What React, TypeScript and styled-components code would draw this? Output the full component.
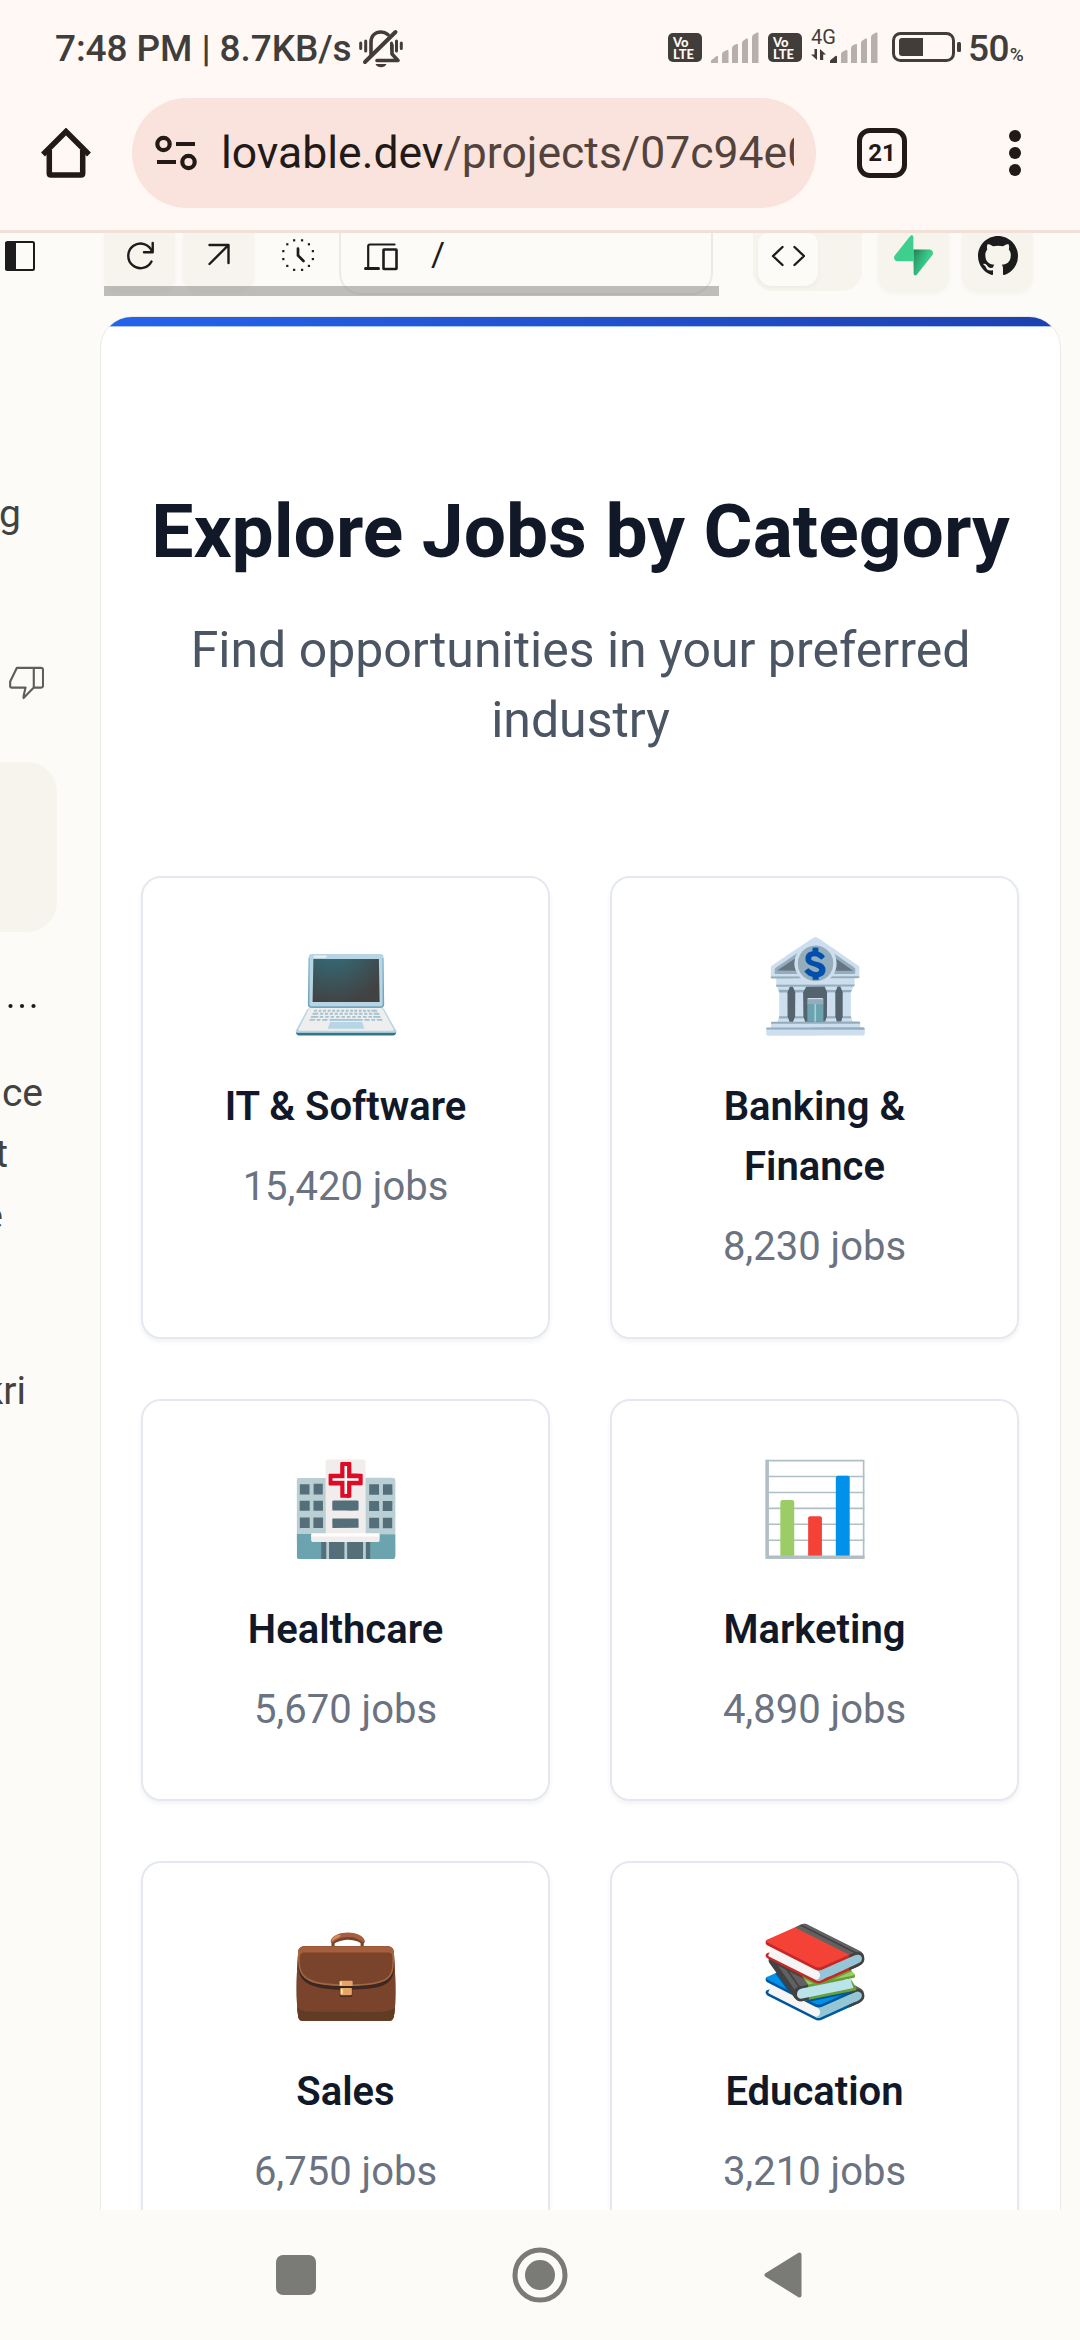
import React from "react";
import styled, { createGlobalStyle } from "styled-components";

const GlobalStyle = createGlobalStyle`
  *, *::before, *::after { box-sizing: border-box; }
  html, body { margin: 0; padding: 0; background: #fcfbf8; }
  body { font-family: Roboto, "Noto Sans", sans-serif; }
  svg { display: block; flex: none; }
`;

const Screen = styled.div`
  width: 1080px;
  height: 2340px;
  display: flex;
  flex-direction: column;
  overflow: hidden;
  background: #fcfbf8;
`;

/* ---------- status bar ---------- */
const StatusBar = styled.header`
  height: 98px;
  flex: none;
  display: flex;
  align-items: flex-start;
  padding: 0 55px 0 55px;
  background: #fff8f5;
  color: #403d3a;
`;
const Clock = styled.span`
  font-size: 37px;
  line-height: 44px;
  margin-top: 27px;
  font-weight: 500;
  letter-spacing: -0.1px;
  white-space: pre;
`;
const StatusGlyph = styled.div<{ $top: number; $left: number }>`
  margin-top: ${(p) => p.$top}px;
  margin-left: ${(p) => p.$left}px;
`;
const StatusRight = styled.div`
  margin-left: auto;
  display: flex;
  align-items: flex-start;
`;
const VolteBadge = styled.div<{ $left?: number }>`
  width: 34px;
  height: 29px;
  margin-top: 33px;
  margin-left: ${(p) => p.$left ?? 0}px;
  border-radius: 5px;
  background: #403d3a;
  color: #fff8f5;
  font: 900 13px/12px Lato, sans-serif;
  padding: 3px 0 0 5px;
`;
const NetworkType = styled.div`
  width: 28px;
  margin-left: 9px;
  margin-top: 26px;
  font-size: 20px;
  line-height: 23px;
`;
const Percent = styled.div`
  margin: 27px 0 0 6px;
  font-size: 37px;
  line-height: 44px;
  font-weight: 500;
  width: 57px;
  white-space: nowrap;
  letter-spacing: -0.6px;
  small { font-size: 19px; margin-left: 1px; }
`;

/* ---------- browser bar ---------- */
const BrowserBar = styled.div`
  height: 135px;
  flex: none;
  display: flex;
  align-items: flex-start;
  background: #fff8f5;
  border-bottom: 3px solid #f3dfd9;
`;
const HomeSlot = styled.div`
  width: 132px;
  padding: 30px 0 0 41px;
`;
const AddressPill = styled.div`
  width: 684px;
  height: 110px;
  border-radius: 55px;
  background: #f9e3dc;
  display: flex;
  align-items: center;
  padding: 0 22px 0 23px;
`;
const Url = styled.div`
  width: 573px;
  margin-left: 23px;
  overflow: hidden;
  white-space: nowrap;
  font-size: 44.5px;
  line-height: 60px;
  color: #54433d;
  b { font-weight: 400; color: #231917; }
`;
const TabCount = styled.div`
  width: 50px;
  height: 50px;
  margin: 30px 0 0 41px;
  border: 5.5px solid #231917;
  border-radius: 13px;
  display: flex;
  align-items: center;
  justify-content: center;
  font-size: 24px;
  font-weight: 700;
  color: #231917;
`;
const MenuSlot = styled.div`
  padding: 31px 0 0 101px;
`;

/* ---------- page ---------- */
const Page = styled.main`
  height: 1977px;
  flex: none;
  display: grid;
  grid-template-columns: 100px 980px;
  overflow: hidden;
  background: #fcfbf8;
`;
const Chat = styled.aside`
  display: flex;
  flex-direction: column;
  align-items: flex-start;
  overflow: hidden;
`;
const ChatIcon = styled.div<{ $top: number; $left: number }>`
  margin: ${(p) => p.$top}px 0 0 ${(p) => p.$left}px;
`;
const ChatLine = styled.div<{ $top?: number; $width: number }>`
  width: ${(p) => p.$width}px;
  margin-top: ${(p) => p.$top ?? 0}px;
  display: flex;
  justify-content: flex-end;
  overflow: hidden;
  white-space: nowrap;
  font-size: 39px;
  line-height: 61px;
  color: #44423f;
`;
const Bubble = styled.div`
  width: 57px;
  height: 170px;
  margin-top: 62px;
  border-radius: 0 30px 30px 0;
  background: #f7f4ed;
`;

const Main = styled.div`
  display: flex;
  flex-direction: column;
`;
const Toolbar = styled.div`
  height: 83px;
  flex: none;
  display: flex;
  align-items: flex-start;
  padding-left: 4px;
  color: #1c1c1c;
`;
const ScrollStrip = styled.div`
  position: relative;
  width: 615px;
  height: 63px;
  display: flex;
  align-items: flex-start;
`;
const ScrollThumb = styled.div`
  position: absolute;
  left: 0;
  right: 0;
  bottom: 0;
  height: 10px;
  background: rgba(128, 128, 128, 0.5);
`;
const ToolButton = styled.div<{ $plain?: boolean; $left?: number; $top?: number }>`
  width: 71px;
  height: 59px;
  margin-left: ${(p) => p.$left ?? 0}px;
  padding-top: ${(p) => p.$top ?? 5}px;
  display: flex;
  justify-content: center;
  border-radius: 0 0 16px 16px;
  background: ${(p) => (p.$plain ? "transparent" : "#f7f4ed")};
  box-shadow: ${(p) => (p.$plain ? "none" : "0 2px 5px rgba(0, 0, 0, 0.035)")};
`;
const RouteBox = styled.div`
  width: 374px;
  height: 62px;
  margin-left: 6px;
  border: 2px solid #eceae4;
  border-top: 0;
  border-radius: 0 0 22px 22px;
  display: flex;
  padding: 9px 0 0 23px;
`;
const Slash = styled.span`
  font-size: 34px;
  line-height: 30px;
  margin: -3px 0 0 33px;
`;
const ViewSwitch = styled.div`
  width: 109px;
  height: 58px;
  margin-left: 34px;
  padding-left: 5px;
  border-radius: 0 0 20px 20px;
  background: #f7f4ed;
`;
const ViewOption = styled.div`
  width: 60px;
  height: 53px;
  display: flex;
  justify-content: center;
  padding-top: 12px;
  border-radius: 10px 10px 14px 14px;
  background: #fcfbf8;
  box-shadow: 0 2px 4px rgba(0, 0, 0, 0.04);
`;

const Preview = styled.section`
  width: 961px;
  height: 1920px;
  flex: none;
  border: 1.5px solid #eceae4;
  border-radius: 32px 32px 0 0;
  background: #fff;
  overflow: hidden;
  display: flex;
  flex-direction: column;
`;
const Hero = styled.div`
  height: 10px;
  flex: none;
  background: linear-gradient(90deg, #2563eb, #1e40af);
  border-bottom: 1px solid #a9c4fa;
`;
const Categories = styled.div`
  padding: 159px 40px 0;
  text-align: center;
`;
const Title = styled.h2`
  margin: 0 -20px;
  font-size: 75px;
  line-height: 90px;
  font-weight: 700;
  white-space: nowrap;
  color: #111827;
`;
const Subtitle = styled.p`
  margin: 39px 0 0;
  font-size: 50px;
  line-height: 70px;
  color: #4b5563;
`;
const CardGrid = styled.div`
  margin-top: 121px;
  display: grid;
  grid-template-columns: 409px 409px;
  grid-template-rows: 463px 402px 402px;
  gap: 60px;
  justify-content: start;
`;
const Card = styled.article`
  border: 2px solid #e4e9f0;
  border-radius: 20px;
  background: #fff;
  box-shadow: 0 3px 5px rgba(0, 0, 0, 0.05);
  padding: 59px 58px 0;
`;
const Emoji = styled.div`
  height: 100px;
  font-size: 90px;
  line-height: 100px;
  display: flex;
  justify-content: center;
`;
const CardName = styled.h3`
  margin: 40px 0 20px;
  font-size: 40px;
  line-height: 60px;
  font-weight: 600;
  color: #111827;
`;
const JobCount = styled.p`
  margin: 0;
  font-size: 40px;
  line-height: 60px;
  color: #6b7280;
`;

const NavBar = styled.nav`
  height: 130px;
  flex: none;
  background: #fcfbf8;
  display: flex;
  align-items: center;
  padding-left: 276px;
`;
const NavGlyph = styled.div<{ $left: number }>`
  margin-left: ${(p) => p.$left}px;
`;

/* ---------- icons ---------- */
const SilentBell = () => (
  <svg width="44" height="39" viewBox="0 0 44 39" fill="none" stroke="#403d3a" strokeLinecap="round">
    <path d="M12 26V13.5C12 7 16 3 22 3c3 0 5 1 7 2.6M33 16v9l6 6.5H18" strokeWidth="3.6" strokeLinejoin="round" />
    <path d="M36.500 3 6 33" strokeWidth="4" />
    <path d="M16.500 35h11c-1 2.300-3 3.300-5.500 3.300s-4.500-1-5.500-3.300z" fill="#403d3a" stroke="none" />
    <path d="M1.700 14v5.500M6.700 12v10M32.500 14v6M37.500 12v10M42.300 14v5.500" strokeWidth="3" />
  </svg>
);

const Signal = ({ lit }: { lit?: boolean }) => (
  <svg width="48" height="31" viewBox="0 0 48 31" fill="#b5b0ad">
    <path d="M0 31v-2.500L5.500 24q1.500-.8 1.500.8V31z" fill={lit ? "#403d3a" : "#b5b0ad"} />
    <path d="M11 31V22.500q0-2 1.500-2.800l3.500-1.600q1.500-.4 1.500 1V31z" />
    <path d="M21 31V16q0-1.500 1.500-2.500l3-1.500q1.500-.5 1.500 1V31z" />
    <path d="M31 31V11q0-1.500 1.500-2.500l3-2q1.500-.5 1.500 1V31z" />
    <path d="M41 31V5q0-1.500 1.500-2.500l3.500-2q1.500-.5 1.500 1V31z" />
  </svg>
);

const DataArrows = () => (
  <svg width="16" height="11" viewBox="0 0 16 11" fill="#403d3a">
    <path d="M3.500 0H6v11L0 5.500h3.500zM9 0l6 5.500h-2.800V11H9z" />
  </svg>
);

const Battery = () => (
  <svg width="70" height="30" viewBox="0 0 70 30">
    <rect x="1.500" y="1.500" width="60" height="27" rx="7" fill="none" stroke="#403d3a" strokeWidth="3" />
    <rect x="7" y="6" width="24" height="18" rx="3" fill="#403d3a" />
    <rect x="27" y="6" width="4" height="18" fill="#403d3a" />
    <rect x="65" y="10" width="4" height="10" rx="1.500" fill="#403d3a" />
  </svg>
);

const Home = () => (
  <svg width="50" height="50" viewBox="0 0 50 50" fill="none" stroke="#231917" strokeWidth="5.500" strokeLinejoin="round">
    <path d="M8.300 22V45.500Q8.300 47 10 47H40Q41.700 47 41.700 45.500V22" />
    <path d="M2 26.500 25 3.500 48 26.500" strokeLinejoin="miter" />
  </svg>
);

const SiteSettings = () => (
  <svg width="43" height="36" viewBox="0 0 43 36" fill="none" stroke="#231917" strokeWidth="4.200">
    <circle cx="8.500" cy="9" r="6.200" />
    <path d="M21 9H40M2 27H21" />
    <circle cx="33.500" cy="27" r="6.200" />
  </svg>
);

const Dots = () => (
  <svg width="14" height="48" viewBox="0 0 14 48" fill="#231917">
    <circle cx="7" cy="7" r="6" />
    <circle cx="7" cy="24" r="6" />
    <circle cx="7" cy="41" r="6" />
  </svg>
);

const PanelIcon = () => (
  <svg width="30" height="30" viewBox="0 0 30 30">
    <rect x="1" y="1" width="28" height="28" rx="1.500" fill="none" stroke="#1c1c1c" strokeWidth="2" />
    <rect x="0" y="1" width="11" height="28" rx="1" fill="#1c1c1c" />
  </svg>
);

const ThumbDown = () => (
  <svg width="35" height="34" viewBox="0 0 36 34" fill="none" stroke="#5f5e5b" strokeWidth="2.200" strokeLinejoin="round">
    <path d="M25.500 1.500H8L1.200 15.500V20q0 1.700 1.700 1.700H17L15 30.500V32.500L25.500 21.700zM25.500 1.500H33q2 0 2 2V19.700q0 2-2 2H25.500" />
  </svg>
);

const Ellipsis = () => (
  <svg width="30" height="6" viewBox="0 0 30 6" fill="#1c1c1c">
    <circle cx="2.500" cy="3" r="2.100" />
    <circle cx="14" cy="3" r="2.100" />
    <circle cx="25.500" cy="3" r="2.100" />
  </svg>
);

const Reload = () => (
  <svg width="34" height="34" viewBox="0 0 34 34" fill="none" stroke="#1c1c1c" strokeWidth="2.400" strokeLinecap="round" strokeLinejoin="round">
    <path d="M28.500 23.500A12.300 12.300 0 1 1 29 13.300" />
    <path d="M29.700 5V14.300H21" />
  </svg>
);

const ArrowUpRight = () => (
  <svg width="34" height="34" viewBox="0 0 34 34" fill="none" stroke="#1c1c1c" strokeWidth="2.400" strokeLinecap="round" strokeLinejoin="round">
    <path d="M7.500 7H26.500V25M7.500 26 26.500 7" />
  </svg>
);

const History = () => (
  <svg width="34" height="34" viewBox="0 0 34 34" fill="none" stroke="#1c1c1c">
    <path d="M17 10.500V17.500L22.500 23" strokeWidth="2.700" strokeLinecap="round" />
    {Array.from({ length: 12 }, (_, i) => {
      const a = ((i * 30 + 15) * Math.PI) / 180;
      return <rect key={i} x={16 + 15.3 * Math.cos(a)} y={16 + 15.3 * Math.sin(a)} width="2.2" height="2.2" fill="#1c1c1c" stroke="none" />;
    })}
  </svg>
);

const Devices = () => (
  <svg width="34" height="30" viewBox="0 0 34 30" fill="none" stroke="#1c1c1c" strokeWidth="2.200" strokeLinecap="round">
    <path d="M30.500 2.500H6Q4.200 2.500 4.200 4.200V25" />
    <path d="M1.500 26.500H14.500" strokeWidth="3" />
    <rect x="19.500" y="7.500" width="13" height="19.500" rx=".5" strokeWidth="2.600" />
  </svg>
);

const Code = () => (
  <svg width="34" height="22" viewBox="0 0 34 22" fill="none" stroke="#1c1c1c" strokeWidth="2.400" strokeLinecap="round" strokeLinejoin="round">
    <path d="M11.500 2 2 11 11.500 20M23.500 2 33 11 23.500 20" />
  </svg>
);

const Supabase = () => (
  <svg width="39" height="41" viewBox="0 0 109 113">
    <defs>
      <linearGradient id="bolt" x1="53.9" y1="54.9" x2="94.1" y2="71.8" gradientUnits="userSpaceOnUse">
        <stop stopColor="#249361" />
        <stop offset="1" stopColor="#3ECF8E" />
      </linearGradient>
      <linearGradient id="shade" x1="36.1" y1="30.5" x2="54.4" y2="65" gradientUnits="userSpaceOnUse">
        <stop />
        <stop offset="1" stopOpacity="0" />
      </linearGradient>
    </defs>
    <path d="M63.700 110.300C60.800 113.900 55 111.900 55 107.300L54 40.060H99.200C107.400 40.060 112 49.500 106.900 55.900Z" fill="url(#bolt)" />
    <path d="M63.700 110.300C60.800 113.900 55 111.900 55 107.300L54 40.060H99.200C107.400 40.060 112 49.500 106.900 55.900Z" fill="url(#shade)" fillOpacity=".2" />
    <path d="M45.300 2.070C48.200-1.530 54 .44 54 5.040L54.500 72.300H9.800C1.600 72.300-2.900 62.800 2.200 56.400Z" fill="#3ECF8E" />
  </svg>
);

const GitHub = () => (
  <svg width="40" height="40" viewBox="0 0 16 16" fill="#1c1c1c">
    <path d="M8 0C3.58 0 0 3.58 0 8c0 3.54 2.29 6.53 5.47 7.59.4.07.55-.17.55-.38 0-.19-.01-.82-.01-1.49-2.01.37-2.53-.49-2.69-.94-.09-.23-.48-.94-.82-1.13-.28-.15-.68-.52-.01-.53.63-.01 1.08.58 1.23.82.72 1.21 1.87.87 2.33.66.07-.52.28-.87.51-1.07-1.78-.2-3.64-.89-3.64-3.95 0-.87.31-1.59.82-2.15-.08-.2-.36-1.02.08-2.12 0 0 .67-.21 2.2.82.64-.18 1.32-.27 2-.27s1.360.09 2 .27c1.53-1.04 2.2-.82 2.2-.82.44 1.1.16 1.92.08 2.12.51.56.82 1.27.82 2.15 0 3.07-1.87 3.75-3.65 3.95.29.25.54.73.54 1.48 0 1.07-.01 1.93-.01 2.2 0 .21.15.46.55.38A8.01 8.01 0 0 0 16 8c0-4.42-3.58-8-8-8" />
  </svg>
);

const categories = [
  { name: "IT & Software", jobs: "15,420", icon: "💻" },
  { name: "Banking & Finance", jobs: "8,230", icon: "🏦" },
  { name: "Healthcare", jobs: "5,670", icon: "🏥" },
  { name: "Marketing", jobs: "4,890", icon: "📊" },
  { name: "Sales", jobs: "6,750", icon: "💼" },
  { name: "Education", jobs: "3,210", icon: "📚" },
];

export default function App() {
  return (
    <>
      <GlobalStyle />
      <Screen>
        <StatusBar>
          <Clock>7:48 PM | 8.7KB/s</Clock>
          <StatusGlyph $top={29} $left={8}><SilentBell /></StatusGlyph>
          <StatusRight>
            <VolteBadge>Vo<br />LTE</VolteBadge>
            <StatusGlyph $top={32} $left={9}><Signal /></StatusGlyph>
            <VolteBadge $left={9}>Vo<br />LTE</VolteBadge>
            <NetworkType>4G<DataArrows /></NetworkType>
            <StatusGlyph $top={32} $left={-9}><Signal lit /></StatusGlyph>
            <StatusGlyph $top={32} $left={14}><Battery /></StatusGlyph>
            <Percent>50<small>%</small></Percent>
          </StatusRight>
        </StatusBar>
        <BrowserBar>
          <HomeSlot><Home /></HomeSlot>
          <AddressPill>
            <SiteSettings />
            <Url><b>lovable.dev</b>/projects/07c94e0</Url>
          </AddressPill>
          <TabCount>21</TabCount>
          <MenuSlot><Dots /></MenuSlot>
        </BrowserBar>
        <Page>
          <Chat>
            <ChatIcon $top={8} $left={5}><PanelIcon /></ChatIcon>
            <ChatLine $top={213} $width={21}>g</ChatLine>
            <ChatIcon $top={121} $left={9}><ThumbDown /></ChatIcon>
            <Bubble />
            <ChatIcon $top={71} $left={8}><Ellipsis /></ChatIcon>
            <ChatLine $top={54} $width={43}>ce</ChatLine>
            <ChatLine $width={8}>t</ChatLine>
            <ChatLine $top={1} $width={3}>e</ChatLine>
            <ChatLine $top={114} $width={26}>kri</ChatLine>
          </Chat>
          <Main>
            <Toolbar>
              <ScrollStrip>
                <ToolButton><Reload /></ToolButton>
                <ToolButton $left={8}><ArrowUpRight /></ToolButton>
                <ToolButton $plain $left={8}><History /></ToolButton>
                <RouteBox><Devices /><Slash>/</Slash></RouteBox>
                <ScrollThumb />
              </ScrollStrip>
              <ViewSwitch><ViewOption><Code /></ViewOption></ViewSwitch>
              <ToolButton $left={16} $top={2}><Supabase /></ToolButton>
              <ToolButton $left={13} $top={3}><GitHub /></ToolButton>
            </Toolbar>
            <Preview>
              <Hero />
              <Categories>
                <Title>Explore Jobs by Category</Title>
                <Subtitle>Find opportunities in your preferred<br />industry</Subtitle>
                <CardGrid>
                  {categories.map((c) => (
                    <Card key={c.name}>
                      <Emoji>{c.icon}</Emoji>
                      <CardName>{c.name}</CardName>
                      <JobCount>{c.jobs} jobs</JobCount>
                    </Card>
                  ))}
                </CardGrid>
              </Categories>
            </Preview>
          </Main>
        </Page>
        <NavBar>
          <svg width="40" height="40" fill="#7a7a77"><rect width="40" height="40" rx="7" /></svg>
          <NavGlyph $left={196}>
            <svg width="56" height="56" fill="#7a7a77">
              <circle cx="28" cy="28" r="25" fill="none" stroke="#7a7a77" strokeWidth="5" />
              <circle cx="28" cy="28" r="15" />
            </svg>
          </NavGlyph>
          <NavGlyph $left={196}>
            <svg width="38" height="46" viewBox="0 0 38 46" fill="#7a7a77" stroke="#7a7a77" strokeWidth="4" strokeLinejoin="round">
              <path d="M2.500 23 35.500 2.500V43.500z" />
            </svg>
          </NavGlyph>
        </NavBar>
      </Screen>
    </>
  );
}
